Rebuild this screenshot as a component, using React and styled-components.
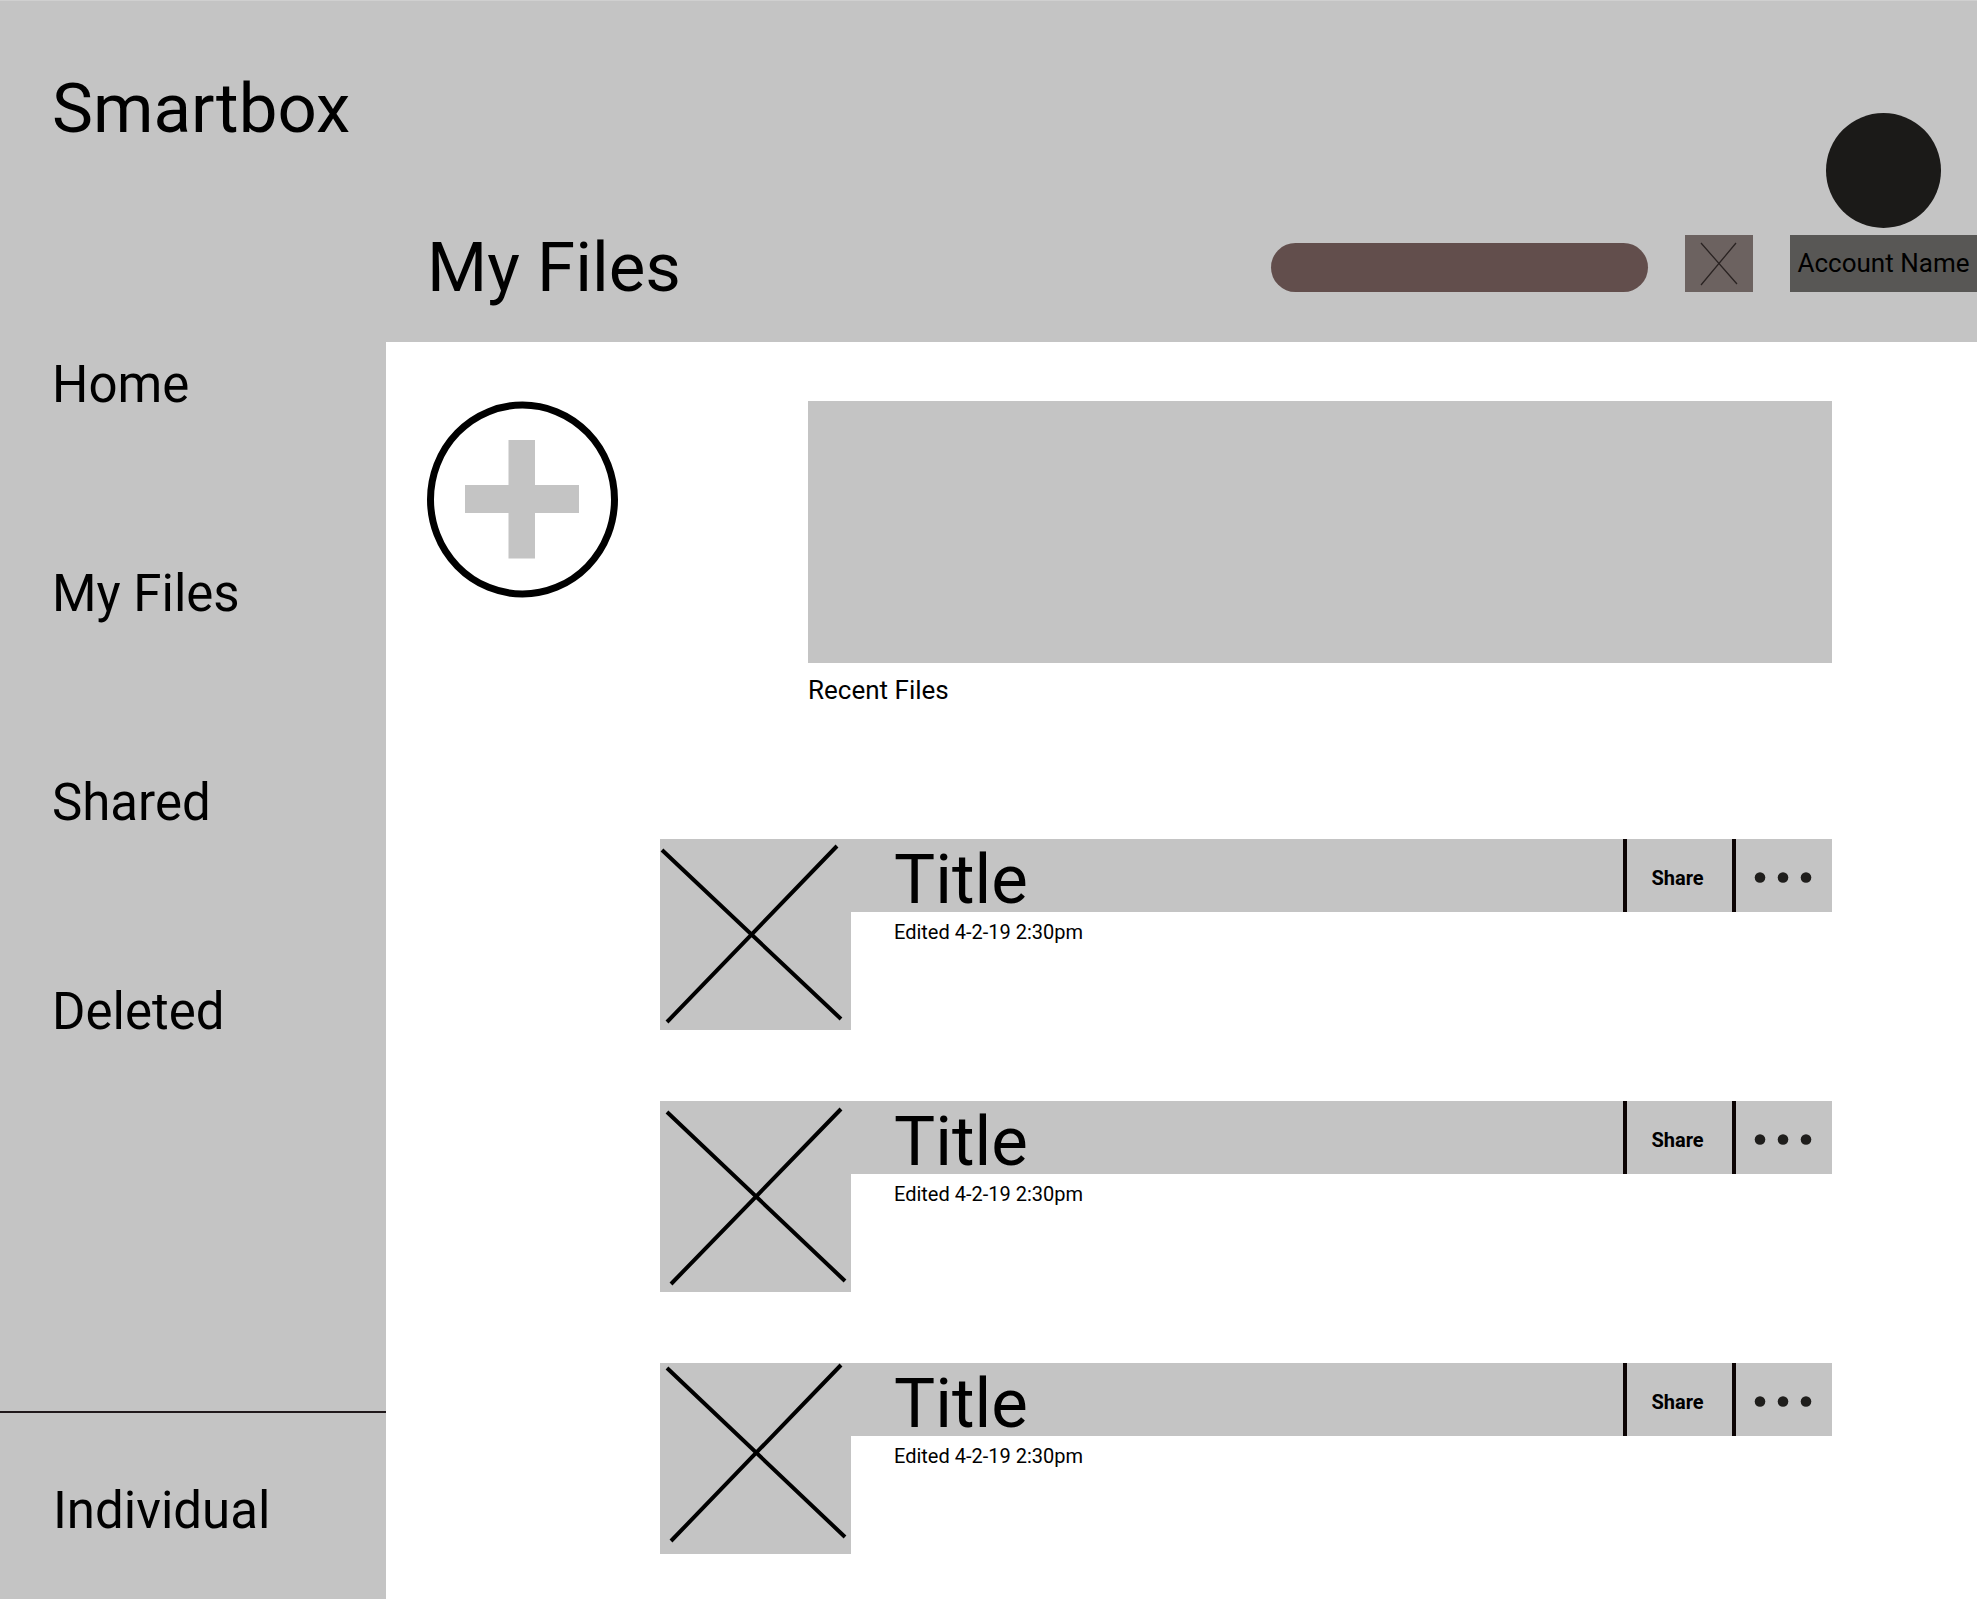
import React from "react";
import styled, { createGlobalStyle } from "styled-components";

const grey = "#c4c4c4";

const GlobalStyle = createGlobalStyle`
  *, *::before, *::after { box-sizing: border-box; }
  body { margin: 0; background: ${grey}; color: #000; font-family: Roboto, "Liberation Sans", sans-serif; }
  h1, h2, h3, p, ul { margin: 0; padding: 0; font-weight: 400; }
  ul { list-style: none; }
  button { margin: 0; padding: 0; border: 0; background: none; color: inherit; font: inherit; cursor: pointer; }
  svg { display: block; }
`;

const Page = styled.div`
  display: grid;
  grid-template-columns: 386px minmax(0, 1fr);
  min-height: 100vh;
  border-top: 1px solid #d0d0d0;
  background: ${grey};
`;

const Sidebar = styled.aside`
  display: flex;
  flex-direction: column;
  padding-top: 68px;
`;

const Brand = styled.h1`
  padding-left: 52px;
  font-size: 69px;
  line-height: 80px;
`;

const Nav = styled.nav`
  margin: 206px 0 60px;
  padding-left: 52px;
`;

const NavList = styled.ul`
  display: flex;
  flex-direction: column;
  align-items: flex-start;
  gap: 149px;
`;

const SideLink = styled.a`
  display: block;
  color: inherit;
  font-size: 51px;
  line-height: 60px;
  text-decoration: none;
`;

const SidebarFooter = styled.div`
  margin-top: auto;
  padding: 68px 0 58px 53px;
  border-top: 2px solid #1f181a;
`;

const Body = styled.div`
  display: flex;
  flex-direction: column;
`;

const Header = styled.header`
  display: flex;
  align-items: flex-end;
  gap: 37px;
  padding: 112px 0 50px 41px;
`;

const PageTitle = styled.h2`
  flex: 1;
  font-size: 69px;
  line-height: 48px;
`;

const Search = styled.input`
  width: 377px;
  height: 49px;
  margin: 0;
  padding: 0 24px;
  border: 0;
  border-radius: 25px;
  background: #624e4c;
  color: #fff;
  font: 20px Roboto, "Liberation Sans", sans-serif;
`;

const SearchButton = styled.button`
  width: 68px;
  height: 57px;
  background: #6c6260;
`;

const Account = styled.div`
  display: flex;
  flex-direction: column;
  align-items: center;
  gap: 7px;
  width: 187px;
`;

const Avatar = styled.div`
  width: 115px;
  height: 115px;
  border-radius: 50%;
  background: #1b1a18;
`;

const AccountButton = styled.button`
  width: 100%;
  height: 57px;
  padding-bottom: 2px;
  background: #585755;
  font-size: 26px;
  line-height: 32px;
  white-space: nowrap;
`;

const Main = styled.main`
  flex: 1;
  padding: 59px 145px 45px 40px;
  background: #fff;
`;

const TopRow = styled.div`
  display: flex;
  align-items: flex-start;
  gap: 190px;
`;

const AddButton = styled.button`
  flex: none;
`;

const Recent = styled.section`
  flex: 1;
`;

const RecentPanel = styled.div`
  height: 262px;
  background: ${grey};
`;

const RecentLabel = styled.h3`
  margin-top: 11px;
  font-size: 26px;
  line-height: 32px;
`;

const FileList = styled.ul`
  display: flex;
  flex-direction: column;
  gap: 71px;
  margin-top: 133px;
  padding-left: 234px;
`;

const FileRow = styled.li`
  display: flex;
  align-items: flex-start;
`;

const Thumb = styled.div`
  flex: none;
  width: 191px;
  height: 191px;
  background: ${grey};
`;

const FileInfo = styled.div`
  flex: 1;
`;

const FileBar = styled.div`
  display: flex;
  height: 73px;
  padding-left: 43px;
  background: ${grey};
`;

const FileTitle = styled.h3`
  flex: 1;
  padding-top: 9px;
  font-size: 69px;
  line-height: 64px;
`;

const BarButton = styled.button`
  display: flex;
  align-items: center;
  justify-content: center;
  width: ${(p) => p.$width}px;
  padding: 4px 4px 0 0;
  border-left: 4px solid #0c0404;
  font-size: 20px;
  font-weight: 700;
`;

const Edited = styled.p`
  margin-top: 8px;
  padding-left: 43px;
  font-size: 20px;
  line-height: 24px;
`;

const links = ["Home", "My Files", "Shared", "Deleted"];

const files = [
  { id: 1, title: "Title", edited: "Edited 4-2-19 2:30pm", cross: "M2 11L181 180M177 7L7 183" },
  { id: 2, title: "Title", edited: "Edited 4-2-19 2:30pm", cross: "M7 11L185 180M181 8L11 183" },
  { id: 3, title: "Title", edited: "Edited 4-2-19 2:30pm", cross: "M7 5L185 174M181 2L11 178" },
];

function File({ file }) {
  return (
    <FileRow>
      <Thumb>
        <svg width="191" height="191" viewBox="0 0 191 191" aria-hidden="true">
          <path d={file.cross} stroke="#000" strokeWidth="4" fill="none" />
        </svg>
      </Thumb>
      <FileInfo>
        <FileBar>
          <FileTitle>{file.title}</FileTitle>
          <BarButton type="button" $width={109}>Share</BarButton>
          <BarButton type="button" $width={100} aria-label="More options">
            <svg width="60" height="12" viewBox="0 0 60 12" fill="#1f1e1c" aria-hidden="true">
              <circle cx="8" cy="5.500" r="5.300" />
              <circle cx="31" cy="5.500" r="5.300" />
              <circle cx="54" cy="5.500" r="5.300" />
            </svg>
          </BarButton>
        </FileBar>
        <Edited>{file.edited}</Edited>
      </FileInfo>
    </FileRow>
  );
}

export default function App() {
  return (
    <>
      <GlobalStyle />
      <Page>
        <Sidebar>
          <Brand>Smartbox</Brand>
          <Nav aria-label="Main">
            <NavList>
              {links.map((name) => (
                <li key={name}>
                  <SideLink href="#">{name}</SideLink>
                </li>
              ))}
            </NavList>
          </Nav>
          <SidebarFooter>
            <SideLink href="#">Individual</SideLink>
          </SidebarFooter>
        </Sidebar>
        <Body>
          <Header>
            <PageTitle>My Files</PageTitle>
            <Search type="search" aria-label="Search files" />
            <SearchButton type="button" aria-label="Search">
              <svg width="68" height="57" viewBox="0 0 68 57" aria-hidden="true">
                <path d="M16 8L52 49M51 8L16 50" stroke="#2a2322" strokeWidth="1.300" fill="none" />
              </svg>
            </SearchButton>
            <Account>
              <Avatar />
              <AccountButton type="button">Account Name</AccountButton>
            </Account>
          </Header>
          <Main>
            <TopRow>
              <AddButton type="button" aria-label="Add file">
                <svg width="192" height="197" viewBox="0 0 192 197" aria-hidden="true">
                  <ellipse cx="96.500" cy="98.500" rx="92" ry="94.500" fill="#fff" stroke="#000" strokeWidth="7" />
                  <path d="M82.500 39H109V84H153V112H109V157.500H82.500V112H39V84H82.500Z" fill={grey} />
                </svg>
              </AddButton>
              <Recent>
                <RecentPanel />
                <RecentLabel>Recent Files</RecentLabel>
              </Recent>
            </TopRow>
            <FileList>
              {files.map((file) => (
                <File key={file.id} file={file} />
              ))}
            </FileList>
          </Main>
        </Body>
      </Page>
    </>
  );
}
